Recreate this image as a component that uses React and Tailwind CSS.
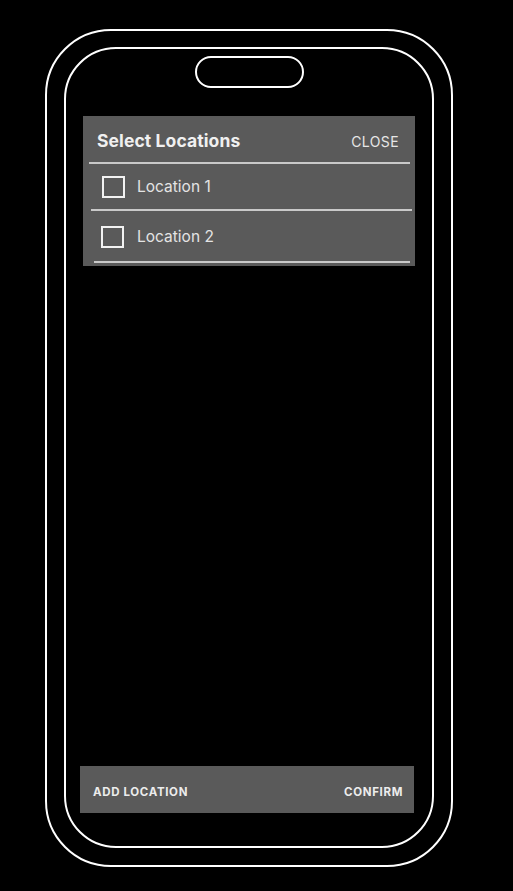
export default function App() {
  const rows = [
    { label: "Location 1", h: "h-[45px]", box: "ml-[19px]", text: "ml-[12px]", line: "ml-[8px] mr-[3px]" },
    { label: "Location 2", h: "h-[50px]", box: "ml-[18px]", text: "ml-[13px]", line: "ml-[11px] mr-[5px]" },
  ];

  return (
    <div
      className="w-full min-h-[891px] bg-black pt-[29px] pl-[45px]"
      style={{ fontFamily: "Inter, 'Noto Sans', sans-serif" }}
    >
      {/* phone outline */}
      <div className="w-[408px] h-[838px] border-2 border-white rounded-[66px] pt-[16px] pl-[17px]">
        <div className="w-[370px] h-[801px] border-2 border-white rounded-[52px] flex flex-col items-center">
          <div className="mt-[7px] w-[109px] h-[32px] border-2 border-white rounded-full" />

          <div className="mt-[28px] w-[332px] bg-[#5a5a5a] pb-[3px]">
            <div className="h-[46px] flex items-center justify-between pt-[4px] pl-[14px] pr-[16px]">
              <span className="text-[17.5px] font-bold text-[#f0f0f0] tracking-[0.1px]">
                Select Locations
              </span>
              <button className="text-[14px] text-[#e6e6e6] tracking-[0.4px]">CLOSE</button>
            </div>
            <div className="h-[2px] bg-[#c9c9c9] ml-[6px] mr-[5px]" />
            {rows.map((r) => (
              <div key={r.label}>
                <div className={`${r.h} flex items-center pt-[1px]`}>
                  <div className={`w-[23px] h-[22px] border-2 border-[#f2f2f2] ${r.box}`} />
                  <span className={`text-[15.5px] text-[#e4e4e4] ${r.text}`}>{r.label}</span>
                </div>
                <div className={`h-[2px] bg-[#c9c9c9] ${r.line}`} />
              </div>
            ))}
          </div>

          <div className="mt-auto mb-[33px] self-start ml-[14px] w-[334px] h-[47px] bg-[#5a5a5a] flex items-center justify-between pt-[6px] pl-[13px] pr-[11px]">
            <button className="text-[11.5px] font-bold text-[#ececec] tracking-[0.65px]">ADD LOCATION</button>
            <button className="text-[11.5px] font-bold text-[#ececec] tracking-[0.65px]">CONFIRM</button>
          </div>
        </div>
      </div>
    </div>
  );
}
